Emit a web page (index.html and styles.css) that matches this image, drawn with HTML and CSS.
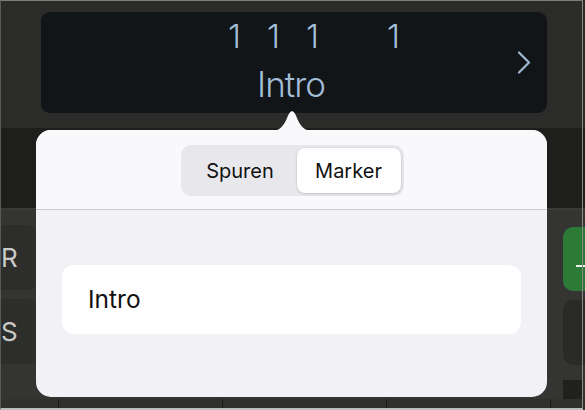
FILE: index.html
```html
<!DOCTYPE html>
<html lang="de">
<head>
<meta charset="utf-8">
<title>Marker</title>
<link rel="stylesheet" href="styles.css">
</head>
<body>
<div class="app">
  <header class="topbar">
    <div class="lcd">
      <div class="lcd-text">
        <div class="pos"><span>1</span><span>1</span><span>1</span><span class="gap">1</span></div>
        <div class="name">Intro</div>
      </div>
      <svg class="chev" width="14" height="23" viewBox="0 0 14 23"><path d="M2 1.5 L12 11.5 L2 21.5" fill="none" stroke="#9fb9d2" stroke-width="2.2" stroke-linecap="round" stroke-linejoin="round"/></svg>
    </div>
  </header>
  <div class="band"></div>
  <div class="tracks">
    <div class="lcol">
      <div class="trow">R</div>
      <div class="trow">S</div>
    </div>
    <div class="mid"></div>
    <div class="rcol">
      <div class="btn-green"><span class="dash"></span></div>
      <div class="btn-dark"></div>
      <div class="sq"></div>
    </div>
  </div>
  <div class="ruler"><i></i><i></i><i></i><i></i></div>

  <div class="popover">
    <svg class="arrow" width="40" height="22" viewBox="0 0 40 22"><path d="M0 22 C10 22 13.5 13 16.5 5.5 Q20 -1.5 23.5 5.5 C26.5 13 30 22 40 22 Z" fill="#f9f9fb"/></svg>
    <div class="pop-head">
      <div class="seg">
        <div class="seg-item seg-a">Spuren</div>
        <div class="seg-item seg-b active">Marker</div>
      </div>
    </div>
    <div class="pop-body">
      <div class="field">Intro</div>
    </div>
  </div>
</div>
</body>
</html>
```

FILE: styles.css
```css
html, body {
  margin: 0;
  padding: 0;
  background: #2b2b29;
}
.app {
  position: relative;
  width: 585px;
  height: 410px;
  overflow: hidden;
  display: flex;
  flex-direction: column;
  background: #2b2b29;
  font-family: Inter, "Noto Sans", sans-serif;
}
.app::after {
  content: "";
  position: absolute;
  inset: 0 2px 0 0;
  border-top: 1px solid #7c7c7a;
  border-left: 1px solid #5a5a58;
  border-right: 1px solid #8a8a88;
  border-bottom: 2px solid #bdbdbd;
  pointer-events: none;
}
.topbar {
  height: 128px;
  flex: none;
  box-sizing: border-box;
  padding: 12px 0 0 41px;
  background: #2b2b29;
}
.lcd {
  width: 506px;
  height: 101px;
  border-radius: 9px;
  background: #111518;
  display: flex;
  align-items: center;
}
.lcd-text {
  width: 468px;
  flex: none;
  align-self: stretch;
  color: #a3bdd6;
  font-weight: 300;
}
.pos {
  display: flex;
  padding: 8px 0 0 174px;
  font-size: 33px;
  line-height: 33px;
}
.pos span {
  width: 39px;
  text-align: center;
}
.pos .gap {
  margin-left: 42px;
}
.name {
  margin-top: 14px;
  font-size: 35px;
  line-height: 35px;
  text-align: center;
  padding-left: 32px;
  letter-spacing: -1px;
}
.chev {
  margin-left: 8px;
}
.band {
  height: 80px;
  flex: none;
  background: #1e1f1c;
  border-bottom: 2px solid #3a3a38;
}
.tracks {
  flex: 1;
  display: flex;
  background: #343432;
}
.lcol {
  width: 36px;
  flex: none;
  display: flex;
  flex-direction: column;
  gap: 9px;
  padding-top: 15px;
}
.trow {
  height: 65px;
  border-radius: 0 8px 8px 0;
  background: #2d2d2b;
  color: #c9c9c7;
  font-size: 26px;
  line-height: 65px;
  padding-left: 1px;
  overflow: hidden;
}
.mid {
  flex: 1;
}
.rcol {
  width: 38px;
  flex: none;
  box-sizing: border-box;
  padding: 17px 0 0 16px;
  display: flex;
  flex-direction: column;
}
.btn-green {
  height: 64px;
  border-radius: 10px 0 0 10px;
  background: #2b7a35;
  position: relative;
}
.dash {
  position: absolute;
  left: 13px;
  right: 0;
  top: 38px;
  height: 2px;
  background: #e8f2e8;
}
.btn-dark {
  margin-top: 9px;
  height: 65px;
  border-radius: 10px 0 0 10px;
  background: #2a2a28;
}
.sq {
  margin-top: 15px;
  width: 20px;
  height: 19px;
  background: #20211e;
}
.ruler {
  height: 13px;
  flex: none;
  background: #30302e;
  display: flex;
  padding-left: 58px;
  gap: 163px;
}
.ruler i {
  width: 1px;
  background: #1a1a19;
}

/* popover */
.popover {
  position: absolute;
  left: 36px;
  top: 130px;
  width: 511px;
  height: 267px;
  border-radius: 15px;
  background: #f2f1f6;
  display: flex;
  flex-direction: column;
}
.arrow {
  position: absolute;
  top: -21px;
  left: 236px;
}
.pop-head {
  height: 80px;
  flex: none;
  background: #f9f9fb;
  border-radius: 15px 15px 0 0;
  border-bottom: 1px solid #c9c9cd;
  display: flex;
  justify-content: center;
  padding-top: 15px;
  box-sizing: border-box;
}
.seg {
  height: 51px;
  box-sizing: border-box;
  padding: 3px;
  border-radius: 10px;
  background: #e8e8ec;
  display: flex;
  margin-left: 1px;
}
.seg-item {
  flex: none;
  display: flex;
  align-items: center;
  justify-content: center;
  font-size: 20px;
  color: #111;
  border-radius: 8px;
}
.seg-a { width: 113px; }
.seg-b { width: 104px; }
.seg-item.active {
  background: #fff;
  box-shadow: 0 1px 3px rgba(0,0,0,0.14), 0 0 0 0.5px rgba(0,0,0,0.05);
}
.pop-body {
  flex: 1;
  padding: 55px 26px 0;
}
.field {
  height: 69px;
  border-radius: 12px;
  background: #fff;
  font-size: 24.5px;
  color: #111;
  line-height: 69px;
  padding-left: 26px;
}
```
